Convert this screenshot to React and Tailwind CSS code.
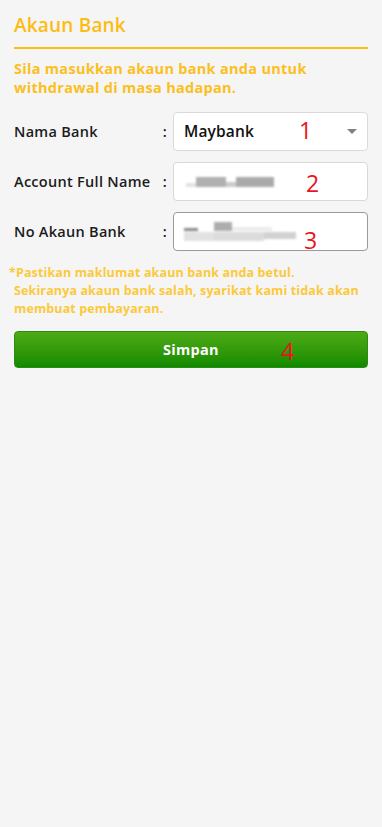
import React from 'react'

const font = { fontFamily: '"Open Sans", "DejaVu Sans", sans-serif' }
const markFont = { fontFamily: '"Open Sans", sans-serif' }

function Row({ label, children }) {
  return (
    <div className="flex items-center">
      <div className="flex w-[159px] shrink-0 items-center justify-between pr-[6px] text-[14.5px] font-semibold tracking-[0.02em] text-[#1c1c1c]">
        <span>{label}</span>
        <span>:</span>
      </div>
      {children}
    </div>
  )
}

// red annotation number drawn over the field
function Mark({ n, className }) {
  return (
    <span className={'absolute text-[23px] leading-[30px] text-[#e8141e] ' + className} style={markFont}>
      {n}
    </span>
  )
}

export default function App() {
  return (
    <div className="min-h-[827px] w-full bg-[#f5f5f5]" style={font}>
      <div className="px-[14px] pt-[12px]">
        <h1 className="border-b-2 border-[#fdc012] pb-[9px] text-[19px] font-semibold leading-[26px] tracking-[0.01em] text-[#fcbd13]">
          Akaun Bank
        </h1>
        <p className="mt-[10px] text-[14.5px] font-bold leading-[19px] tracking-[0.02em] text-[#fbbf1e]">
          Sila masukkan akaun bank anda untuk withdrawal di masa hadapan.
        </p>

        <div className="mt-[15px] flex flex-col gap-[11px]">
          <Row label="Nama Bank">
            <div className="relative flex h-[39px] flex-1 items-center justify-between rounded-[4px] border border-[#dadada] bg-white px-[10px]">
              <span className="text-[15.5px] font-semibold tracking-[0.01em] text-[#111]">Maybank</span>
              <span className="h-0 w-0 border-x-[5px] border-t-[5px] border-x-transparent border-t-[#808080]" />
              <Mark n="1" className="left-[125px] top-[2px]" />
            </div>
          </Row>
          <Row label="Account Full Name">
            <div className="relative flex h-[39px] flex-1 items-center rounded-[4px] border border-[#d8d8d8] bg-white pl-[12px]">
              <div className="flex items-end blur-[1.2px]">
                <span className="h-[4px] w-[10px] bg-[#e2e2e2]" />
                <span className="h-[10px] w-[30px] bg-[#b0b0b0]" />
                <span className="h-[5px] w-[10px] bg-[#cacaca]" />
                <span className="h-[10px] w-[38px] bg-[#aaaaaa]" />
              </div>
              <Mark n="2" className="left-[132px] top-[5px]" />
            </div>
          </Row>
          <Row label="No Akaun Bank">
            <div className="relative flex h-[39px] flex-1 items-center rounded-[4px] border border-[#9a9a9a] bg-white pl-[10px]">
              <div className="flex flex-col gap-[1px] blur-[1.2px]">
                <div className="flex items-end">
                  <span className="h-[3px] w-[14px] bg-[#8a8a8a]" />
                  <span className="ml-[16px] h-[9px] w-[18px] bg-[#adadad]" />
                  <span className="h-[4px] w-[40px] bg-[#ececec]" />
                </div>
                <div className="flex">
                  <span className="h-[9px] w-[30px] bg-[#e2e2e2]" />
                  <span className="h-[9px] w-[50px] bg-[#dcdcdc]" />
                  <span className="h-[7px] w-[32px] bg-[#d2d2d2]" />
                </div>
              </div>
              <Mark n="3" className="left-[130px] top-[12px]" />
            </div>
          </Row>
        </div>
      </div>

      <div className="mt-[13px] pl-[9px] pr-[14px] text-[12.5px] font-bold leading-[18px] tracking-[0.01em] text-[#fcc93c]">
        <p>*Pastikan maklumat akaun bank anda betul.</p>
        <p className="pl-[5px]">Sekiranya akaun bank salah, syarikat kami tidak akan membuat pembayaran.</p>
      </div>

      <div className="mt-[13px] px-[14px]">
        <button className="relative flex h-[37px] w-full items-center justify-center rounded-[4px] border border-[#2f8a10] bg-gradient-to-b from-[#4dab16] to-[#0e8a00] text-[14.5px] font-bold tracking-[0.02em] text-white">
          Simpan
          <Mark n="4" className="left-[266px] top-[4px] font-normal tracking-normal" />
        </button>
      </div>
    </div>
  )
}
